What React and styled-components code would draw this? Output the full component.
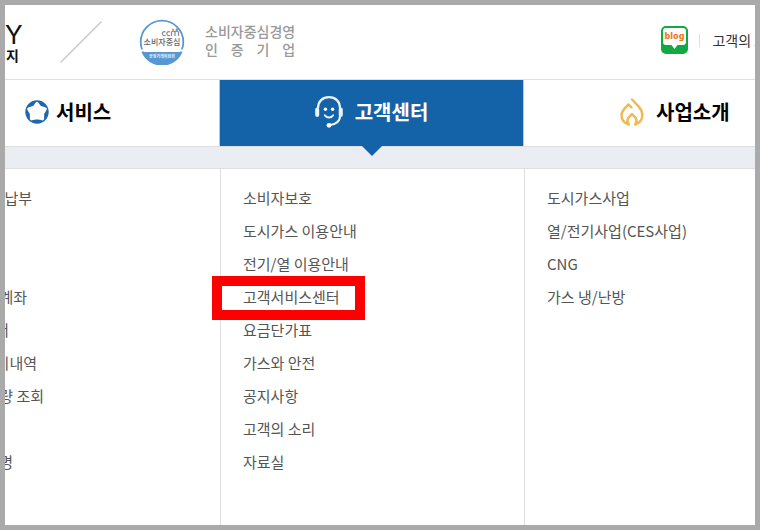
import React from 'react'
import styled, { createGlobalStyle } from 'styled-components'

const blue = '#1463a8'
const line = '#dddfe1'

const business = ['도시가스사업', '열/전기사업(CES사업)', 'CNG', '가스 냉/난방']

const center = [
  '소비자보호',
  '도시가스 이용안내',
  '전기/열 이용안내',
  '고객서비스센터',
  '요금단가표',
  '가스와 안전',
  '공지사항',
  '고객의 소리',
  '자료실',
]

// the first column runs off the left edge, so each row shows only its tail
const service = [
  { text: '납부', visible: 27 },
  { text: '', visible: 0 },
  { text: '', visible: 0 },
  { text: '계좌', visible: 22 },
  { text: '서', visible: 4 },
  { text: '기내역', visible: 32 },
  { text: '량 조회', visible: 39 },
  { text: '', visible: 0 },
  { text: '명', visible: 8 },
]

const StarIcon = () => (
  <svg width="24" height="24" viewBox="0 0 24 24" aria-hidden="true">
    <circle cx="12" cy="12" r="11.700" fill="#1f68ad" />
    <path
      d="M12 3.500 14.800 7.200 20.300 9 17.600 13.400 17.500 18.800 12 17.700 6.500 18.800 6.400 13.400 3.700 9 9.200 7.200Z"
      fill="#fff"
      stroke="#fff"
      strokeWidth="3.200"
      strokeLinejoin="round"
    />
  </svg>
)

const HeadsetIcon = () => (
  <svg width="28" height="32" viewBox="0 0 28 32" fill="none" stroke="#e9f3fb" aria-hidden="true">
    <path d="M3 12C3 5.5 7.5 1.2 14 1.2S25 5.5 25 12v8c0 5-4 8.300-10 9" strokeWidth="2.200" />
    <path d="M2.200 13.500v5.500M25.800 13.500v5.500" strokeWidth="4" strokeLinecap="round" />
    <circle cx="14" cy="29.300" r="2.400" fill="#fff" stroke="none" />
    <circle cx="10.400" cy="13.300" r="1.700" fill="#fff" stroke="none" />
    <circle cx="17.600" cy="13.300" r="1.700" fill="#fff" stroke="none" />
    <path d="M9.800 19.200c1.800 3 6.600 3 8.400 0" strokeWidth="1.900" strokeLinecap="round" />
  </svg>
)

const FlameIcon = () => (
  <svg width="24" height="28" viewBox="0 0 24 28" fill="none" stroke="#f1b94d" strokeWidth="2.400" strokeLinecap="round" strokeLinejoin="round" aria-hidden="true">
    <path d="M8.500 26.300C4.500 25 1.500 21.500 1.500 17c0-4.200 3.800-7.500 7-10.500l3 3" />
    <path d="M12 1.500l6.500 6.800c2.200 2.400 3.800 5 3.800 8.700 0 4.500-2.900 8-6.800 9.300" />
    <path d="M8.800 26.300C7.200 24.500 7 22.500 8 20.500c.8-1.700 2.800-2.700 4-4.500 1.200 1.800 3.200 2.800 4 4.500 1 2 .8 4-.8 5.800" />
  </svg>
)

const CcmMark = () => (
  <svg width="46" height="46" viewBox="0 0 46 46" role="img" aria-label="소비자중심">
    <circle cx="23" cy="23" r="21.300" fill="#fff" stroke="#5797d2" strokeWidth="1.800" />
    <path d="M2.500 33A22.200 22.200 0 0 0 43.500 33Z" fill="#5797d2" />
    <path d="M0 31.500h46" stroke="#fff" strokeWidth="2" />
    <path d="M26.500 13a2 2 0 1 0 0 3.200M31 13a2 2 0 1 0 0 3.200M32.500 17v-4l2-1 1.500 1 1.500-1 2 1v4M36 13v4" fill="none" stroke="#8a8a8a" strokeWidth="1.200" />
    <circle cx="34" cy="10.700" r="1.200" fill="#ef9b44" />
    <circle cx="37.800" cy="10.700" r="1.200" fill="#5797d2" />
    <CcmText x="23" y="26">소비자중심</CcmText>
    <CcmFoot x="23" y="39">공정거래위원회</CcmFoot>
  </svg>
)

const BlogIcon = () => (
  <svg width="28" height="28" viewBox="0 0 28 28" aria-hidden="true">
    <rect width="27" height="28" rx="5" fill="#12a940" />
    <path d="M5 2h17a3 3 0 0 1 3 3v11a3 3 0 0 1-3 3h-5.500L13.500 23 10.500 19H5a3 3 0 0 1-3-3V5a3 3 0 0 1 3-3Z" fill="#fff" />
    <BlogText x="13.500" y="13">blog</BlogText>
  </svg>
)

const Tab = ({ icon, offset, active, children }) => (
  <TabLink href="#" $offset={offset} $active={active} aria-current={active ? 'true' : undefined}>
    {icon}
    <span>{children}</span>
  </TabLink>
)

export default function App() {
  return (
    <>
      <GlobalStyle />
      <Page>
        <Header>
          <Logo href="#">
            <LogoLatin>Y</LogoLatin>
            <LogoKorean>지</LogoKorean>
          </Logo>
          <svg width="42" height="42" viewBox="0 0 42 42" aria-hidden="true">
            <path d="M.5 41.500 41.500.5" stroke="#c9c9c9" strokeWidth="1.500" />
          </svg>
          <Certificate>
            <CcmMark />
            <CertificateText>
              <span>소비자중심경영</span>
              <Spread>
                <span>인</span>
                <span>증</span>
                <span>기</span>
                <span>업</span>
              </Spread>
            </CertificateText>
          </Certificate>
          <Utility>
            <BlogLink href="#" aria-label="blog">
              <BlogIcon />
            </BlogLink>
            <VoiceLink href="#">고객의 소리</VoiceLink>
          </Utility>
        </Header>
        <Tabs>
          <Tab icon={<StarIcon />} offset={20}>서비스</Tab>
          <Tab icon={<HeadsetIcon />} active>고객센터</Tab>
          <Tab icon={<FlameIcon />} offset={96}>사업소개</Tab>
        </Tabs>
        <Strip />
        <Menus>
          <Menu>
            {service.map((item, i) => (
              <Row key={i}>
                {item.text && (
                  <TailLink href="#" $visible={item.visible}>
                    {item.text}
                  </TailLink>
                )}
              </Row>
            ))}
          </Menu>
          <Menu $inset>
            {center.map((text) => (
              <Row key={text}>
                <MenuLink href="#" $marked={text === '고객서비스센터'}>{text}</MenuLink>
              </Row>
            ))}
          </Menu>
          <Menu $inset>
            {business.map((text) => (
              <Row key={text}>
                <MenuLink href="#">{text}</MenuLink>
              </Row>
            ))}
          </Menu>
        </Menus>
      </Page>
    </>
  )
}

const GlobalStyle = createGlobalStyle`
  * {
    box-sizing: border-box;
  }
  body {
    margin: 0;
    background: #fff;
    font-family: 'Noto Sans CJK KR', sans-serif;
  }
  a {
    color: inherit;
    text-decoration: none;
  }
  svg {
    display: block;
    flex: none;
  }
`

const Page = styled.div`
  display: flex;
  flex-direction: column;
  min-height: 100vh;
  border: 5px solid #aaa;
  overflow: hidden;
`

const Header = styled.header`
  display: flex;
  align-items: center;
  height: 75px;
  border-bottom: 1px solid ${line};
`

const Logo = styled.a`
  display: flex;
  flex-direction: column;
  width: 55px;
  padding-top: 2px;
  color: #111;
`

const LogoLatin = styled.span`
  font: 400 26px/24px Inter, sans-serif;
`

const LogoKorean = styled.span`
  padding-left: 1px;
  font-size: 14px;
  font-weight: 700;
  line-height: 16px;
`

const Certificate = styled.div`
  display: flex;
  align-items: center;
  gap: 20px;
  margin-left: 37px;
`

const CertificateText = styled.div`
  display: flex;
  flex-direction: column;
  padding-bottom: 4px;
  color: #999;
  font-size: 14px;
  font-weight: 500;
  line-height: 18px;
`

const Spread = styled.div`
  display: flex;
  justify-content: space-between;
`

const CcmText = styled.text`
  fill: #666;
  font-size: 8px;
  font-weight: 500;
  text-anchor: middle;
`

const CcmFoot = styled.text`
  fill: #e4f0fa;
  font-size: 4px;
  font-weight: 700;
  text-anchor: middle;
`

const BlogText = styled.text`
  fill: #f07818;
  font-family: 'Noto Sans', sans-serif;
  font-size: 9px;
  font-weight: 800;
  text-anchor: middle;
`

const Utility = styled.nav`
  display: flex;
  align-items: center;
  margin-left: auto;
  margin-right: -25px;
  padding-bottom: 4px;
`

const BlogLink = styled.a`
  display: flex;
  padding-right: 10px;
`

const VoiceLink = styled.a`
  display: flex;
  align-items: center;
  gap: 12px;
  color: #333;
  font-size: 14px;
  line-height: 20px;
  white-space: nowrap;

  &::before {
    content: '';
    width: 1px;
    height: 13px;
    background: ${line};
  }
`

const Tabs = styled.nav`
  display: grid;
  grid-template-columns: 215fr 304fr 231fr;
  height: 66px;
`

const TabLink = styled.a`
  position: relative;
  display: flex;
  align-items: center;
  justify-content: ${(p) => (p.$active ? 'center' : 'flex-start')};
  gap: ${(p) => (p.$offset === 20 ? 7 : 12)}px;
  padding: 0 0 2px ${(p) => p.$offset || 0}px;
  border-right: 1px solid #b9c9d6;
  background: ${(p) => (p.$active ? blue : '#fff')};
  color: ${(p) => (p.$active ? '#fff' : '#000')};
  font-size: 20px;
  font-weight: 700;
  line-height: 28px;

  &:last-child {
    border-right: 0;
  }

  &::after {
    content: '';
    display: ${(p) => (p.$active ? 'block' : 'none')};
    position: absolute;
    top: 100%;
    left: 50%;
    margin-left: -10px;
    border: 10px solid transparent;
    border-top-color: ${blue};
    border-bottom: 0;
  }
`

const Strip = styled.div`
  height: 23px;
  border-top: 1px solid ${line};
  border-bottom: 1px solid ${line};
  background: #eaedf2;
`

const Menus = styled.div`
  display: grid;
  grid-template-columns: 215fr 304fr 231fr;
  flex: 1;
`

const Menu = styled.ul`
  margin: 0;
  padding: 12px 0 30px ${(p) => (p.$inset ? 22 : 0)}px;
  border-left: ${(p) => (p.$inset ? `1px solid ${line}` : '0')};
  list-style: none;
`

const Row = styled.li`
  height: 33px;
  color: #555;
  font-size: 15px;
  line-height: 33px;
`

const MenuLink = styled.a`
  position: relative;
  display: inline-block;
  white-space: nowrap;

  &::after {
    content: '';
    display: ${(p) => (p.$marked ? 'block' : 'none')};
    position: absolute;
    inset: -4px -25px -7px -31px;
    border: 10px solid #f00;
  }
`

const TailLink = styled.a`
  display: flex;
  justify-content: flex-end;
  width: ${(p) => p.$visible}px;
  overflow: hidden;
  white-space: nowrap;
`
